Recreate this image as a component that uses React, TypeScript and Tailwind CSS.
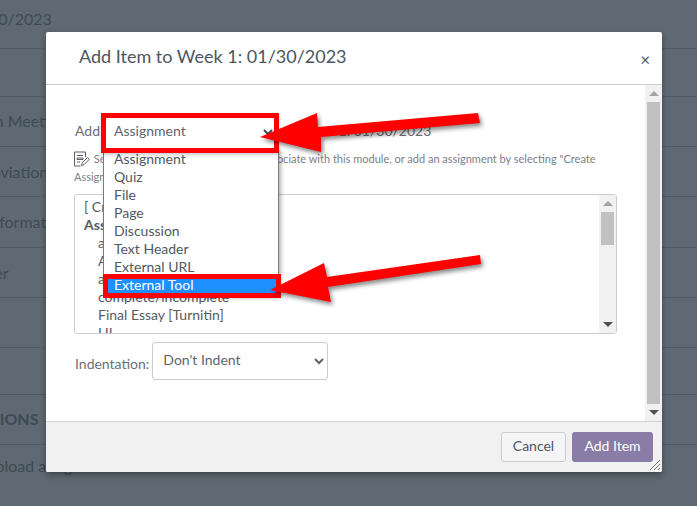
const rows = [
  { h: "h-[49px]", text: "Week 1: 01/30/2023", cls: "text-[16px] ml-[-99px] mt-[-11px]" },
  { h: "h-[48px]", text: "", cls: "" },
  { h: "h-[50px]", text: "Zoom Meeting", cls: "text-[16px] ml-[-37px] mt-[-1px]" },
  { h: "h-[50px]", text: "Abbreviations", cls: "text-[16px] ml-[-42px]" },
  { h: "h-[51px]", text: "Information", cls: "text-[16px] ml-[-14px]" },
  { h: "h-[50px]", text: "Paper", cls: "text-[16px] ml-[-32px]" },
  { h: "h-[50px]", text: "", cls: "" },
  { h: "h-[47px]", text: "", cls: "" },
  { h: "h-[50px]", text: "INSTRUCTIONS", cls: "text-[16px] font-bold ml-[-78px] mt-[-2px]" },
];

const options = ["Assignment", "Quiz", "File", "Page", "Discussion", "Text Header", "External URL"];

const listItems = [
  { text: "[ Create Assignment ]", cls: "pl-[9px]" },
  { text: "Assignments", cls: "pl-[9px] font-bold" },
  { text: "assignment one", cls: "pl-[23px]" },
  { text: "Assignment two", cls: "pl-[23px]" },
  { text: "assignment for the final essay", cls: "pl-[23px]" },
  { text: "complete/incomplete", cls: "pl-[23px]" },
  { text: "Final Essay [Turnitin]", cls: "pl-[23px]" },
  { text: "HI", cls: "pl-[23px]" },
];

function ScrollUp() {
  return <div className="w-0 h-0 border-x-[5px] border-x-transparent border-b-[5px] border-b-[#a3a3a3]" />;
}

function ScrollDown() {
  return <div className="w-0 h-0 border-x-[5px] border-x-transparent border-t-[5px] border-t-[#505050]" />;
}

export default function App() {
  return (
    <div className="relative w-[697px] h-[506px] overflow-hidden bg-[#5f6973] text-[#3f4953] font-['Lato',sans-serif]">
      {rows.map((r, i) => (
        <div key={i} className={`${r.h} flex items-center border-b border-[#515b65] whitespace-nowrap`}>
          <span className={r.cls}>{r.text}</span>
        </div>
      ))}
      <div className="text-[16px] text-[#3f4953] ml-[-16px] mt-[9px] whitespace-nowrap">Upload assignments</div>

      {/* modal */}
      <div className="absolute left-[46px] top-[32px] w-[616px] h-[440px] flex flex-col bg-white rounded-[2px] shadow-[0_3px_6px_rgba(0,0,0,0.35)]">
        <div className="h-[53px] shrink-0 flex items-center justify-between border-b border-[#c7cdd1] pl-[33px] pr-[11px] pb-[4px]">
          <span className="text-[18px] text-[#4b5661]">Add Item to Week 1: 01/30/2023</span>
          <span className="text-[17px] leading-none text-[#4b5661] mt-[6px] mr-[1px]">×</span>
        </div>

        <div className="h-[336px] shrink-0 flex">
          <div className="flex-1 min-w-0 pl-[28px] pr-[28px] pt-[35px]">
            <div className="flex items-center h-[20px] text-[14px] text-[#6b7077]">
              <span className="ml-[1px]">Add</span>
              <span className="ml-[180px] pl-[3px]">to Week 1: 01/30/2023</span>
            </div>
            <div className="mt-[10px] text-[11px] leading-[18px] text-[#7b8087] h-[38px]">
              <svg className="inline-block w-[16px] h-[16px] mr-[1px] align-[-4px]" viewBox="0 0 16 16" fill="none" stroke="#5a6068" strokeWidth="1">
                <path d="M11.5 6V1H.5v14h6" />
                <path d="M3 4.5h6M3 7h6v1.5H3zM3 11h3" />
                <path d="M7.5 14.5l.7-2.7 5.3-5.3 1.8 1.8-5.3 5.3z" />
              </svg>
              {" "}Select the assignment you want to associate with this module, or add an assignment by selecting "Create Assignment".
            </div>
            <div className="mt-[6px] relative h-[140px] border border-[#c7cdd1] rounded-[3px] overflow-hidden text-[14px] leading-[18px] text-[#565c63] pt-[3px]">
              {listItems.map((it) => (
                <div key={it.text} className={`${it.cls} whitespace-nowrap`}>{it.text}</div>
              ))}
              <div className="absolute right-0 top-0 bottom-0 w-[17px] bg-[#f1f1f1] flex flex-col items-center">
                <div className="h-[17px] flex items-center justify-center"><ScrollUp /></div>
                <div className="w-[13px] h-[33px] bg-[#c1c1c1]" />
                <div className="mt-auto h-[17px] flex items-center justify-center"><ScrollDown /></div>
              </div>
            </div>
            <div className="mt-[8px] flex items-center text-[14px] text-[#6b7077]">
              <span className="mt-[4px] ml-[1px]">Indentation:</span>
              <select className="ml-[3px] w-[176px] h-[38px] pl-[6px] pb-[3px] border border-[#c7cdd1] rounded-[3px] bg-white text-[14px] text-[#5f656c]">
                <option>Don't Indent</option>
              </select>
            </div>
          </div>
          <div className="w-[17px] shrink-0 bg-[#f1f1f1] flex flex-col items-center">
            <div className="h-[17px] flex items-center justify-center"><ScrollUp /></div>
            <div className="w-[13px] flex-1 bg-[#c1c1c1]" />
            <div className="h-[17px] flex items-center justify-center"><ScrollDown /></div>
          </div>
        </div>

        <div className="flex-1 relative flex items-center justify-end gap-[6px] border-t border-[#d2d2d2] bg-[#f1f1f1] pr-[9px] rounded-b-[2px]">
          <button className="w-[65px] h-[30px] border border-[#c7cdd1] rounded-[3px] bg-[#f5f5f5] pb-[3px] text-[14px] text-[#4b5661]">Cancel</button>
          <button className="w-[81px] h-[30px] rounded-[3px] bg-[#897ca6] pb-[3px] text-[14px] text-white">Add Item</button>
          <svg className="absolute right-[2px] bottom-[2px] w-[10px] h-[10px]" viewBox="0 0 10 10" stroke="#777" strokeWidth="1">
            <path d="M0 10L10 0M4 10L10 4M8 10L10 8" />
          </svg>
        </div>
      </div>

      {/* open dropdown */}
      <div className="absolute left-[103px] top-[148px] w-[176px] h-[148px] bg-white border border-[#7a7a7a] shadow-[2px_2px_4px_rgba(0,0,0,0.3)] text-[14px] leading-[18px] text-[#4f5963] pt-[1px]">
        {options.map((o) => (
          <div key={o} className="pl-[10px]">{o}</div>
        ))}
        <div className="pl-[10px] bg-[#1e90ff] text-white">External Tool</div>
      </div>

      {/* closed select, boxed in red */}
      <div className="absolute left-[101px] top-[113px] w-[178px] h-[40px] border-[5px] border-[#ff0000] bg-white flex items-center pl-[8px] pb-[6px] text-[14px] text-[#5f656c] shadow-[0_2px_3px_rgba(0,0,0,0.2)]">
        <span>Assignment</span>
      </div>
      <div className="absolute left-[103px] top-[274px] w-[178px] h-[24px] border-[5px] border-[#ff0000]" />

      {/* arrows */}
      <svg className="absolute left-0 top-0 pointer-events-none" width="697" height="506" viewBox="0 0 697 506">
        <path d="M264 130 L268 134 L272 130" fill="none" stroke="#3f4953" strokeWidth="2" />
        <g className="drop-shadow-[2px_3px_2px_rgba(0,0,0,0.45)]">
          <polygon points="260,137 317,113 318,127 478,113 480,123 321,137 321,152" fill="#ff0000" />
          <polygon points="270,290 324,263 327,277 480,255 481,264 328,287 331,302" fill="#ff0000" />
        </g>
      </svg>
    </div>
  );
}
